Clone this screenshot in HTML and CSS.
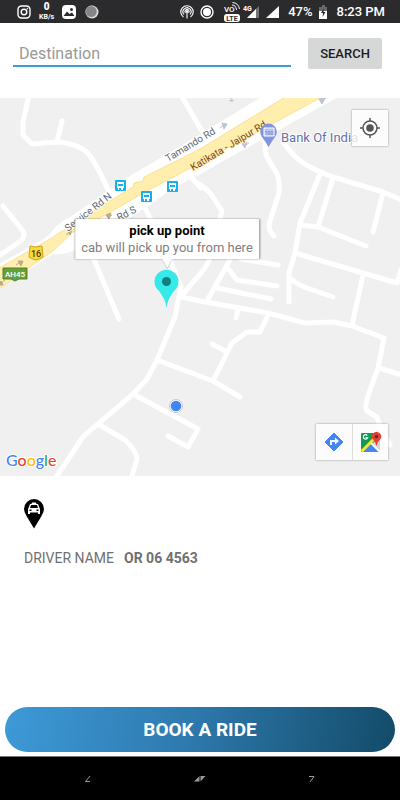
FILE: index.html
```html
<!DOCTYPE html>
<html lang="en">
<head>
<meta charset="utf-8">
<meta name="viewport" content="width=device-width, initial-scale=1">
<title>Book a ride</title>
<link rel="stylesheet" href="styles.css">
</head>
<body>
<header class="status">
  <div class="status-left">
    <svg width="14" height="14" viewBox="0 0 14 14" fill="none" stroke="#fff" stroke-width="1.4"><rect x="1" y="1" width="12" height="12" rx="3.5"/><circle cx="7" cy="7" r="2.8"/><circle cx="10.4" cy="3.6" r=".5" fill="#fff" stroke-width=".6"/></svg>
    <div class="speed"><b>0</b><span>KB/s</span></div>
    <svg width="14" height="14" viewBox="0 0 14 14"><rect width="14" height="14" rx="4" fill="#fff"/><path d="M1.5 11 5 6.500 7.500 9 10 7.500 12.500 11Z" fill="#2b2b2d"/><circle cx="9.500" cy="4.500" r="1.500" fill="#2b2b2d"/></svg>
    <svg class="disc" width="14" height="14" viewBox="0 0 14 14"><circle cx="7" cy="7" r="6.500" fill="#e4e4e4"/><circle cx="6.300" cy="6.500" r="5.500" fill="#858585" stroke="#aaa" stroke-dasharray="1 1"/></svg>
  </div>
  <div class="status-right">
    <svg width="14" height="14" viewBox="0 0 14 14" fill="none" stroke="#fff" stroke-width="1.100"><path d="M3.500 12A6.200 6.200 0 1 1 10.500 12M4 9.500A4 4 0 1 1 10 9.500M5.500 7.800A2 2 0 1 1 8.500 7.800M7 7V13.500"/><circle cx="7" cy="6.500" r=".8" fill="#fff"/></svg>
    <svg width="14" height="14" viewBox="0 0 14 14"><circle cx="7" cy="7" r="6" fill="none" stroke="#fff" stroke-width="1.400"/><circle cx="7" cy="7" r="4" fill="#fff"/></svg>
    <svg class="volte" width="17" height="22" viewBox="0 0 17 22"><text x="0" y="11" class="vo">VO</text><path d="M8 4Q12 4 12.500 9M8.500 1.500Q14.500 2 15.500 8" fill="none" stroke="#fff"/><rect x="0" y="13" width="16" height="8" rx="3" fill="#fff"/><text x="8" y="19.500" class="lte">LTE</text></svg>
    <svg width="17" height="14" viewBox="0 0 17 14"><path d="M16 1V13H4Z" fill="#747476"/><path d="M13 4V13H4Z" fill="#fff"/><text x="0" y="6" class="fourg">4G</text></svg>
    <svg width="14" height="14" viewBox="0 0 14 14"><path d="M13 1V13H0Z" fill="#fff"/></svg>
    <span class="percent">47%</span>
    <svg width="9" height="14" viewBox="0 0 9 14"><path d="M3 0H6V2H8V6H0V2H3Z" fill="#68686a"/><path d="M0 6H8V14H0Z" fill="#fff"/><path d="M5 3 2 8H4L3.500 12 6.500 7H4.500Z" fill="#2b2b2d"/></svg>
    <span class="clock">8:23 PM</span>
  </div>
</header>
<main>
  <form class="search">
    <input type="text" placeholder="Destination" aria-label="Destination">
    <button type="button">SEARCH</button>
  </form>
  <section class="map" aria-label="Map">
    <svg class="canvas" viewBox="0 98 400 378" preserveAspectRatio="xMidYMid slice">
      <rect y="98" width="400" height="378" fill="#f0f0f0"/>
      <g class="roads">
        <path d="M29 95 23 122V135L32 144 57 142Q82 144 90 156 96 163 111 196M62 121 57 142M3 206 23 231Q26 235 21 241L0 255M181 95 206 138"/>
        <path d="M283 142Q295 158 302 162 310 168 333 177L383 192 402 200M320 174 300 223 295 253 289 273V302M333 178 318 227M383 193 373 232M300 225 318 227 366 246M295 253 397 283 401 270M363 275 352 325M289 277Q294 283 307 288L333 297"/>
        <path d="M265 142Q265 153 267 157L277 174Q280 181 279 193L270 221Q267 229 274 236M197 183Q209 190 213 197L222 211 210 258Q207 267 195 280L181 296M235 250 226 267 208 299M241 259 278 265M227 267 237 280 277 286M217 288 271 299"/>
        <path d="M181 297 200 301 268 313 305 323 333 322 352 326 384 338 378 368 369 393Q364 408 367 411L377 417 380 427 390 445M379 368 402 375M268 315 260 332H247L232 343 213 381M227 352 212 344M238 310 236 318M157 360 213 381 240 397"/>
        <path d="M168 255 181 287 175 317 157 360 147 379 133 394 98 424Q88 432 83 437L55 479M133 394 198 429 188 447 168 436M98 424 125 440Q136 450 137 459L131 479M90 250 119 319M143 204 151 220M192 178 201 188"/>
      </g>
      <path d="M-1 264 42 240 50 234Q56 224 70 217L133 174 181 146 263 96H340L200 174 173 188 147 207 110 230 73 251Q62 255 53 254L-1 289Z" fill="#fff"/>
      <path d="M-1 268 50 239 90 213 133 187 134 183 143 181 144 177 200 149 285 97H322L200 163 147 191 100 218 73 232 53 251-1 289Z" fill="#ffeead" stroke="#f7d980" stroke-width=".7"/>
      <g class="arrows"><path d="M66 235 70 232M68 231 72 230 70 235ZM16 265 20 262M18 261 23 261 21 266ZM5 280 0 284M3 285-2 285 1 281ZM112 215 108 218M106 215 111 213 109 219Z"/><path class="pale" d="M220 128 224 125M222 123 227 124 224 129ZM326 98 321 102M319 99 325 98 322 104ZM249 143 244 146M242 144 247 142 245 148ZM231 97V99M230 100H233V101H230Z"/></g>
      <g class="road-label">
        <text transform="translate(168 162) rotate(-31)">Tamando Rd</text>
        <text transform="translate(68 232) rotate(-38)">Service Rd N</text>
        <text transform="translate(119 221) rotate(-27)">Rd S</text>
        <text class="brown" transform="translate(193 171) rotate(-31)">Katikata - Jaipur Rd</text>
      </g>
      <g fill="#16b1ed">
        <rect x="115" y="180" width="11" height="11" rx="1"/><rect x="141" y="191" width="11" height="11" rx="1"/><rect x="167" y="181" width="11" height="11" rx="1"/>
      </g>
      <g fill="#fff">
        <path fill-rule="evenodd" d="M117 182H124V188H123V190H121V188H119V190H118V188H117ZM118 184V186H123V184Z"/>
        <path fill-rule="evenodd" d="M143 193H150V199H149V201H147V199H145V201H144V199H143ZM144 195V197H149V195Z"/>
        <path fill-rule="evenodd" d="M169 183H176V189H175V191H173V189H171V191H170V189H169ZM170 185V187H175V185Z"/>
      </g>
      <path d="M30 246Q36 248 42 246L43 257Q40 259 36 260 32 259 29 257Z" fill="#fdd835" stroke="#cda218"/>
      <text class="shield" x="36" y="257">16</text>
      <path d="M3 268H27V279H19L15 281 11 279H3Z" fill="#689f38" stroke="#4c852a"/>
      <text class="highway" x="15" y="277">AH45</text>
      <path d="M268.500 147Q265 141 262 137A8.300 8.300 0 1 1 275 137Q272 141 268.500 147Z" fill="#8294df"/>
      <path d="M264 128H274V136H264Z" fill="#b9c3f1" stroke="#fff"/><text class="rupee" x="269" y="135">100</text>
      <text class="place" x="281" y="142">Bank Of India</text>
      <path d="M166.500 308Q166 300 159 291A12 12 0 1 1 174 291Q167 300 166.500 308Z" fill="#35eae8"/><circle cx="166.500" cy="281.500" r="4.500" fill="#12807f"/>
      <circle cx="176" cy="406" r="6.500" fill="#fff" stroke="#ababab" stroke-width=".6"/><circle cx="176" cy="406" r="5.300" fill="#4285f4"/>
      <text class="google" x="6" y="466"><tspan fill="#4285f4">G</tspan><tspan fill="#ea4335">o</tspan><tspan fill="#fbbc05">o</tspan><tspan fill="#4285f4">g</tspan><tspan fill="#34a853">l</tspan><tspan fill="#ea4335">e</tspan></text>
    </svg>
    <div class="popup"><strong>pick up point</strong><span>cab will pick up you from here</span></div>
    <button class="map-button locate" aria-label="My location"><svg width="22" height="22" viewBox="0 0 22 22" fill="none" stroke="#555" stroke-width="1.500"><circle cx="11" cy="11" r="7"/><circle cx="11" cy="11" r="3.800" fill="#555" stroke="none"/><path d="M11 1V4M11 18V21M1 11H4M18 11H21"/></svg></button>
    <div class="map-tools">
      <button class="map-button" aria-label="Directions"><svg width="20" height="20" viewBox="0 0 20 20"><path d="M10 1 19 10 10 19 1 10Z" fill="#4285f4" stroke="#4285f4" stroke-linejoin="round"/><path d="M7 13V9H12" fill="none" stroke="#fff" stroke-width="1.800"/><path d="M11 5.500 15 9 11 12.500Z" fill="#fff"/></svg></button>
      <button class="map-button" aria-label="Open in maps"><svg width="22" height="22" viewBox="0 0 22 22"><rect x="1" y="2" width="19" height="19" rx="1" fill="#159957"/><path d="M2 21 10.500 13 20 21Z" fill="#4285f4"/><path d="M12 13 18 7 20 9V21Z" fill="#d2d3d5"/><path d="M1.500 20.500 15 7" stroke="#fde32d" stroke-width="3"/><path d="M11 12 20 21" stroke="#fff" stroke-width="2"/><path d="M16.500 15Q16 11 13 8.500A4.600 4.600 0 1 1 20 8.500Q17 11 16.500 15Z" fill="#e04132"/><circle cx="16.500" cy="5.500" r="1.700" fill="#7d201b"/><path d="M7.300 4.500A2.200 2.200 0 1 0 7.700 6.500H5.500" fill="none" stroke="#fff" stroke-width="1.200"/></svg></button>
    </div>
  </section>
  <section class="driver">
    <svg width="20" height="30" viewBox="0 0 20 30"><path d="M10 29.500 2.500 17Q0 13 0 10A10 10 0 0 1 20 10Q20 13 17.500 17Z" fill="#000"/><path fill-rule="evenodd" d="M8 3.500H12L12.500 5H14L15.500 9 16 10V15H14V13.500H6V15H4V10L4.500 9 6 5H7.500ZM7 6 6 9H14L13 6ZM5.500 10.500V12H7.500V10.500ZM12.500 10.500V12H14.500V10.500Z" fill="#fff"/></svg>
    <p><span>DRIVER NAME</span><strong>OR 06 4563</strong></p>
  </section>
  <button class="book">BOOK A RIDE</button>
</main>
<nav class="navbar" aria-label="System">
  <button aria-label="Recent"><svg width="8" height="8" viewBox="0 0 8 8"><path d="M6 1 1.500 6.500H6" fill="none" stroke="#999"/></svg></button>
  <button aria-label="Home"><svg width="12" height="8" viewBox="0 0 12 8"><path d="M0 6.500 5.500 1V6.500ZM6.500 1H11.500L6.500 6.500Z" fill="#999"/></svg></button>
  <button aria-label="Back"><svg width="8" height="8" viewBox="0 0 8 8"><path d="M1 1.500H6L2 7" fill="none" stroke="#999"/></svg></button>
</nav>
</body>
</html>
```
FILE: styles.css
```css
* { box-sizing: border-box; }
body {
  margin: 0;
  min-height: 100vh;
  display: flex;
  flex-direction: column;
  background: #fff;
  font-family: Roboto, sans-serif;
  font-size: 14px;
}
button { border: 0; padding: 0; font: inherit; }
svg { display: block; flex: none; }

.status {
  height: 23px;
  padding: 0 15px 0 17px;
  display: flex;
  align-items: center;
  justify-content: space-between;
  background: #2b2b2d;
  color: #fff;
}
.status-left, .status-right { display: flex; align-items: center; }
.status-left { gap: 8px; }
.status-right { gap: 6px; font-size: 13px; font-weight: 500; }
.disc { margin-left: 1px; }
.speed { display: flex; flex-direction: column; align-items: center; font-weight: 700; }
.speed b { font-size: 10px; line-height: 12px; }
.speed span { font-size: 7px; line-height: 9px; }
.volte { margin: 0 -4px 0 4px; }
.vo { font-size: 8px; fill: #fff; }
.lte { font-size: 7px; font-weight: 700; text-anchor: middle; fill: #2b2b2d; }
.fourg { font-size: 7px; font-weight: 700; fill: #fff; }
.percent { margin-left: 2px; }
.clock { margin-left: 3px; }

main { flex: 1; display: flex; flex-direction: column; }
.search {
  height: 75px;
  padding: 15px 18px 0 13px;
  display: flex;
  align-items: flex-start;
  gap: 17px;
}
.search input {
  flex: 1;
  min-width: 0;
  height: 29px;
  padding: 4px 6px 0;
  border: 0;
  border-bottom: 2px solid #3a9bdc;
  outline: 0;
  background: none;
  font: 16px Roboto, sans-serif;
}
.search input::placeholder { color: #999; opacity: 1; }
.search button {
  width: 74px;
  height: 31px;
  border-radius: 2px;
  background: #d6d7d7;
  color: #1c1c1c;
  font-size: 13px;
  font-weight: 500;
}

.map { position: relative; aspect-ratio: 400 / 378; }
.canvas { width: 100%; height: 100%; }
.roads { fill: none; stroke: #fff; stroke-width: 5; stroke-linecap: round; stroke-linejoin: round; }
.arrows { fill: #b8ad88; stroke: #b8ad88; }
.pale { fill: #bdc3d8; stroke: #bdc3d8; }
.road-label { font-size: 10px; fill: #5f6a74; }
.road-label text { stroke: #fff; stroke-width: 2px; paint-order: stroke; }
.road-label .brown { fill: #79431c; stroke: #ffeead; }
.shield { font-size: 9px; font-weight: 500; text-anchor: middle; fill: #443608; }
.highway { font-size: 8px; font-weight: 500; text-anchor: middle; fill: #fff; }
.rupee { font-size: 5px; text-anchor: middle; fill: #6478cc; }
.place { font-size: 13px; fill: #6870a8; stroke: #fff; stroke-width: 2px; paint-order: stroke; }
.google { font-family: Lato, sans-serif; font-size: 16px; font-weight: 500; stroke: #fff; stroke-width: 2px; paint-order: stroke; }

.popup {
  position: absolute;
  left: 41.75%;
  bottom: 57.5%;
  transform: translateX(-50%);
  padding: 3px 6px;
  display: flex;
  flex-direction: column;
  align-items: center;
  background: #fff;
  border-radius: 1px;
  box-shadow: 0 0 2px rgba(0, 0, 0, .5);
  font-size: 13px;
  line-height: 17px;
  white-space: nowrap;
  color: #808080;
}
.popup strong { color: #000; }
.popup::after {
  content: "";
  position: absolute;
  top: 100%;
  border: 5px solid transparent;
  border-top: 9px solid #fff;
  border-bottom: 0;
  filter: drop-shadow(0 1px 0 #bbb);
}
.map-button {
  width: 36px;
  height: 36px;
  display: flex;
  align-items: center;
  justify-content: center;
  background: rgba(255, 255, 255, .8);
}
.locate, .map-tools { position: absolute; right: 12px; box-shadow: 0 0 2px rgba(0, 0, 0, .4); }
.locate { top: 12px; }
.map-tools { bottom: 16px; display: flex; }
.map-button + .map-button { border-left: 1px solid #ddd; }

.driver { padding: 23px 24px; color: #707070; }
.driver p { margin: 20px 0 0; display: flex; gap: 10px; line-height: 18px; }
.book {
  height: 45px;
  margin: auto 5px 4px;
  border-radius: 23px;
  background: linear-gradient(100deg, #3d9ad8, #2f7bb0 45%, #134b69);
  color: #fff;
  font-size: 19px;
  font-weight: 700;
}
.navbar {
  height: 44px;
  padding: 0 32px;
  display: grid;
  grid-template-columns: repeat(3, 1fr);
  background: #000;
  border-top: 1px solid #777;
}
.navbar button { display: flex; align-items: center; justify-content: center; background: none; }
```
